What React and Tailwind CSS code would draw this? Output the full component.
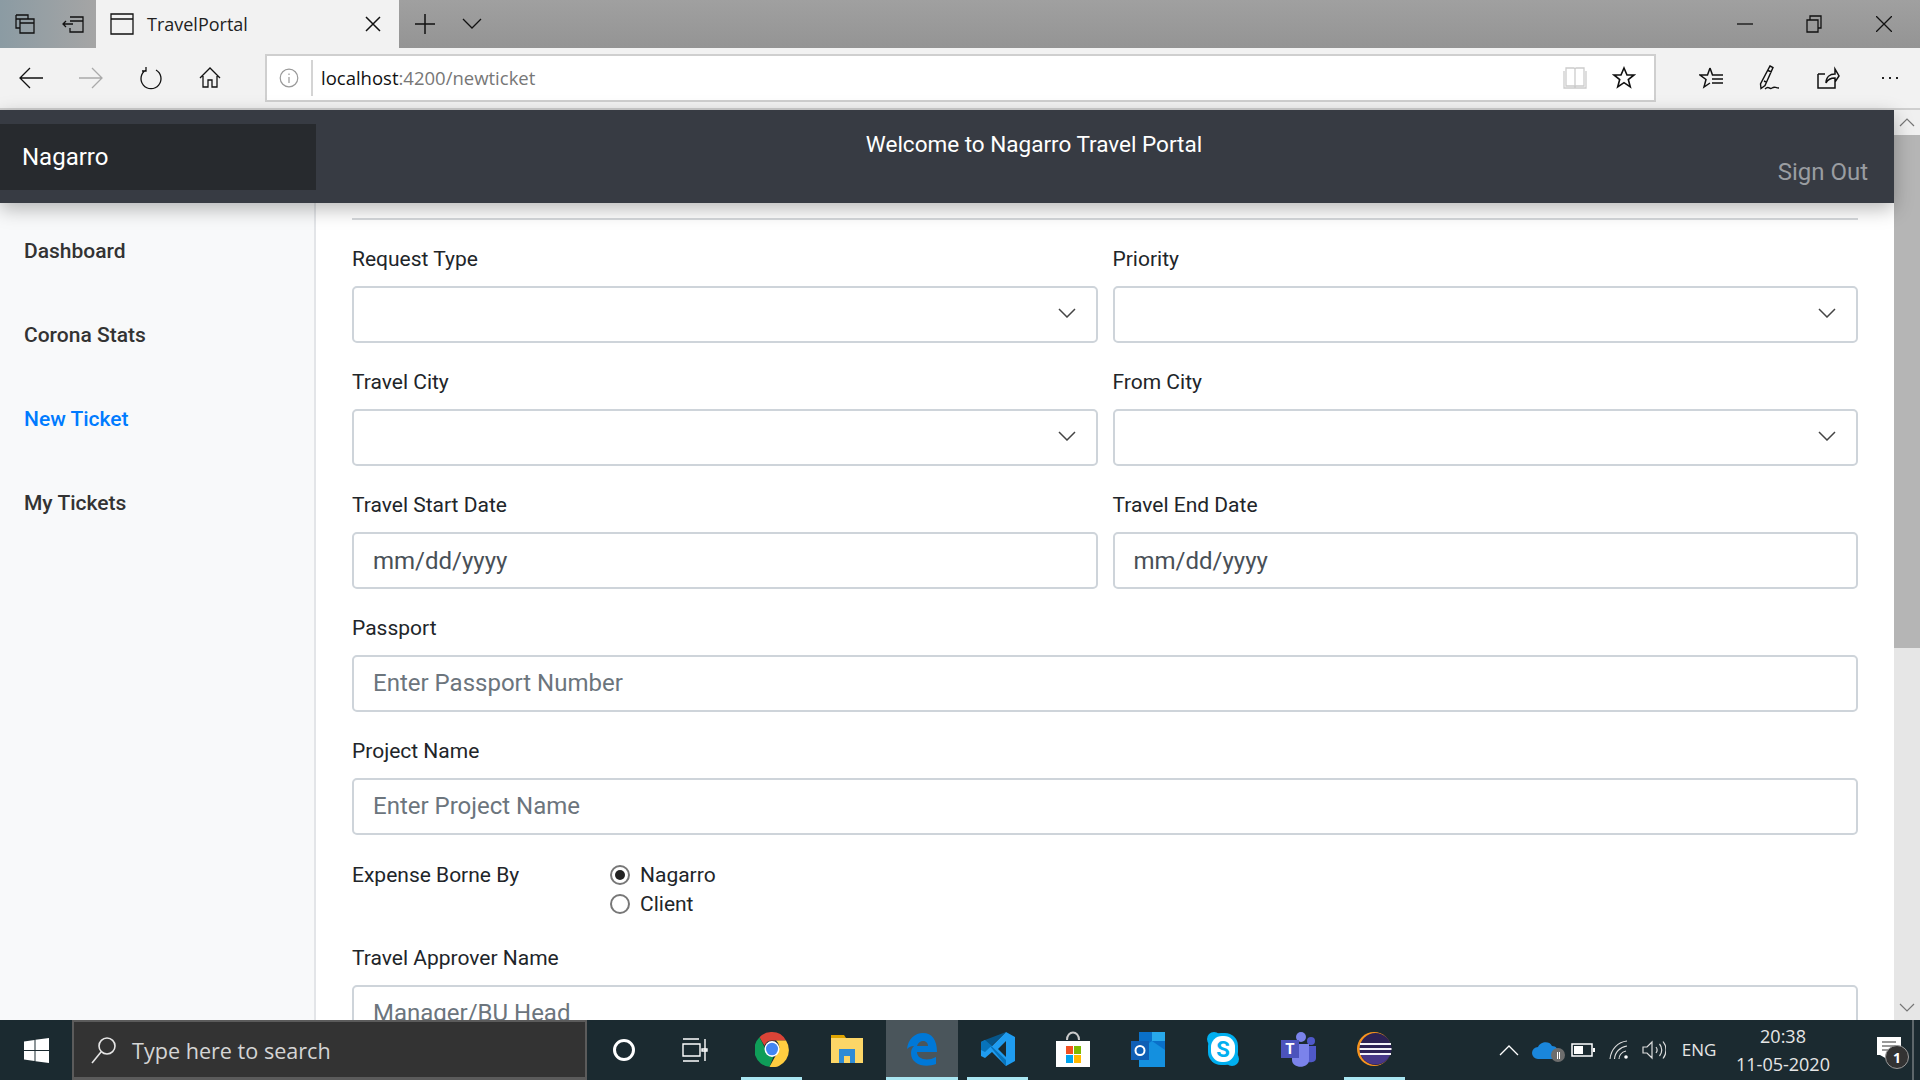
const sans = "font-['Roboto',sans-serif]";

const Ico = ({ w = 24, h = 24, children, className = "" }) => (
  <svg width={w} height={h} viewBox={`0 0 ${w} ${h}`} fill="none" stroke="currentColor" strokeWidth="1.3" className={`shrink-0 ${className}`}>
    {children}
  </svg>
);

const Chevron = () => (
  <svg width="18" height="10" viewBox="0 0 18 10" fill="none" stroke="#444" strokeWidth="1.5">
    <path d="M1 1l8 8 8-8" />
  </svg>
);

function SelectField({ label }) {
  return (
    <div>
      <label className="block h-[30px] mb-[12px] text-[21px] leading-[30px] text-[#212529]">{label}</label>
      <div className="relative">
        <select className="block w-full h-[57px] appearance-none bg-white border-2 border-[#ced4da] rounded-[5px]" />
        <span className="absolute right-[22px] top-[22px] flex pointer-events-none"><Chevron /></span>
      </div>
    </div>
  );
}

function TextField({ label, placeholder, value }) {
  return (
    <div>
      <label className="block h-[30px] mb-[12px] text-[21px] leading-[30px] text-[#212529]">{label}</label>
      <input
        readOnly
        value={value || ""}
        placeholder={placeholder}
        className={`block w-full h-[57px] px-[19px] text-[24px] text-[#495057] placeholder:text-[#6c757d] bg-white border-2 border-[#ced4da] rounded-[5px] outline-none ${value ? "" : "pb-[2px]"}`}
      />
    </div>
  );
}

function TabStrip() {
  return (
    <div className="flex h-[48px] shrink-0 items-center bg-gradient-to-b from-[#a0a0a0] to-[#949494] text-[#111]">
      <div className="flex h-full w-[96px] items-center bg-gradient-to-r from-[#8b9ba3] to-[#a5a5a5]">
        <div className="w-[49px] flex justify-center">
          <Ico>
            <path d="M3 3h12v4M3 3v13h4M7 7h14v14H7zM7 11h14M3 7h4" />
          </Ico>
        </div>
        <div className="w-[47px] flex justify-center">
          <Ico>
            <path d="M9 5h13v15H9v-4M9 9h13M2 12h10M5 9l-3 3 3 3" />
          </Ico>
        </div>
      </div>
      <div className="flex h-full w-[303px] items-center bg-[#f2f2f2] pl-[14px] pr-[18px] font-['Open_Sans',sans-serif] text-[18px]">
        <Ico w={24} h={24}>
          <path d="M1 2h22v20H1zM1 7h22" />
        </Ico>
        <span className="ml-[13px] flex-1 text-[#222]">TravelPortal</span>
        <Ico w={16} h={16}>
          <path d="M1 1l14 14M15 1L1 15" strokeWidth="1.5" />
        </Ico>
      </div>
      <div className="ml-[6px] w-[40px] flex justify-center">
        <Ico w={22} h={22}>
          <path d="M11 1v20M1 11h20" strokeWidth="1.5" />
        </Ico>
      </div>
      <div className="ml-[7px] w-[40px] flex justify-center">
        <Ico w={20} h={12}>
          <path d="M1 1l9 9 9-9" />
        </Ico>
      </div>
      <div className="ml-auto flex items-center">
        <div className="w-[69px] flex justify-center">
          <Ico w={16} h={4}><path d="M0 2h16" /></Ico>
        </div>
        <div className="w-[69px] flex justify-center">
          <Ico w={16} h={18}><path d="M1 5h11v12H1zM4 5V1h11v12h-3" /></Ico>
        </div>
        <div className="w-[72px] flex justify-center">
          <Ico w={16} h={16}><path d="M0 0l16 16M16 0L0 16" /></Ico>
        </div>
      </div>
    </div>
  );
}

function Toolbar() {
  return (
    <div className="flex h-[62px] shrink-0 items-center bg-[#f2f2f2] border-b-2 border-[#cfcfcf] text-[#111]">
      <div className="flex w-[265px] items-center pl-[7px]">
        <div className="w-[48px] flex justify-center">
          <Ico><path d="M24 12H1M11 2L1 12l10 10" /></Ico>
        </div>
        <div className="ml-[12px] w-[48px] flex justify-center text-[#aaa]">
          <Ico><path d="M0 12h23M13 2l10 10-10 10" /></Ico>
        </div>
        <div className="ml-[12px] w-[48px] flex justify-center">
          <Ico><path d="M7 4a10 10 0 1 0 10 0M7 1v4H3" /></Ico>
        </div>
        <div className="ml-[11px] w-[48px] flex justify-center">
          <Ico><path d="M2 12L12 2l10 10M5 10v11h5v-7h4v7h5V10" /></Ico>
        </div>
      </div>
      <div className="flex h-[48px] w-[1391px] shrink-0 items-center bg-white border-2 border-[#cfcfcf]">
        <div className="w-[44px] flex justify-center text-[#999]">
          <svg width="20" height="20" viewBox="0 0 20 20" fill="none" stroke="currentColor" strokeWidth="1.2">
            <circle cx="10" cy="10" r="8.8" />
            <path d="M10 9v6M10 5.500v1.500" />
          </svg>
        </div>
        <div className="h-[36px] w-[2px] bg-[#d4d4d4]" />
        <div className="ml-[8px] flex-1 font-['Open_Sans',sans-serif] text-[18.500px] text-[#111]">
          localhost<span className="text-[#777]">:4200/newticket</span>
        </div>
        <div className="w-[48px] flex justify-center text-[#ccc]">
          <Ico><path d="M3 2h8l1 1 1-1h8v18h-8l-1 1-1-1H3zM12 3v17M1 5v17h22V5" /></Ico>
        </div>
        <div className="w-[50px] flex justify-center mr-[5px]">
          <Ico><path d="M12 2l3 7h7l-5.700 4.500 2 7.500-6.300-4.300L5.700 21l2-7.500L2 9h7z" strokeWidth="1.6" /></Ico>
        </div>
      </div>
      <div className="flex flex-1 items-center pl-[31px]">
        <div className="w-[48px] flex justify-center">
          <Ico><path d="M11 2l2.500 7H24M11 2L8.500 9H1l6 4.500L5 21l6-4M13 13h11M13 17h11" strokeWidth="1.5" /></Ico>
        </div>
        <div className="ml-[11px] w-[48px] flex justify-center">
          <Ico w={26} h={26}><path d="M13 1l3 1.500-8 18-4 3-.5-4.500zM11 5.500l3.500 1.500M7 16l3 1.500M8 24c4-4 4 1 7-1s3 0 7 0" strokeWidth="1.4" /></Ico>
        </div>
        <div className="ml-[10px] w-[48px] flex justify-center">
          <Ico><path d="M2 8v14h17v-6M2 8h7M10 17c0-6 4-9 9-9V3l4 7-4 6v-4c-4 0-7 1-9 5z" strokeWidth="1.5" /></Ico>
        </div>
        <div className="ml-[14px] w-[48px] flex justify-center gap-[5px]">
          <span className="h-[2px] w-[2px] bg-[#222]" />
          <span className="h-[2px] w-[2px] bg-[#222]" />
          <span className="h-[2px] w-[2px] bg-[#222]" />
        </div>
      </div>
    </div>
  );
}

function AppHeader() {
  return (
    <header className={`relative z-10 flex h-[93px] shrink-0 bg-[#373b43] shadow-[0_6px_18px_rgba(0,0,0,0.28)] ${sans}`}>
      <div className="mt-[14px] flex h-[66px] w-[316px] shrink-0 items-center bg-[#272a2e] pl-[22px] text-[24px] text-white">
        Nagarro
      </div>
      <div className="relative flex-1">
        <div className="mt-[19px] pr-[142px] text-center text-[22.500px] leading-[30px] text-white">
          Welcome to Nagarro Travel Portal
        </div>
        <a className="absolute right-[26px] top-[44px] text-[24px] leading-[36px] text-[#9a9da1]">Sign Out</a>
      </div>
    </header>
  );
}

function Sidebar() {
  const links = ["Dashboard", "Corona Stats", "New Ticket", "My Tickets"];
  return (
    <nav className="w-[316px] shrink-0 bg-[#f8f9fa] border-r-2 border-[#e3e5e8] pt-[33px] pl-[24px]">
      {links.map((l) => (
        <div key={l} className={`h-[84px] text-[21px] leading-[30px] font-medium ${l === "New Ticket" ? "text-[#007bff]" : "text-[#333]"}`}>
          {l}
        </div>
      ))}
    </nav>
  );
}

function TicketForm() {
  return (
    <main className="flex-1 px-[36px] pt-[15px]">
      <div className="h-[2px] bg-[#d5d8db]" />
      <div className="mt-[24px] grid grid-cols-2 gap-x-[15px] gap-y-[24px]">
        <SelectField label="Request Type" />
        <SelectField label="Priority" />
        <SelectField label="Travel City" />
        <SelectField label="From City" />
        <TextField label="Travel Start Date" value="mm/dd/yyyy" />
        <TextField label="Travel End Date" value="mm/dd/yyyy" />
        <div className="col-span-2">
          <TextField label="Passport" placeholder="Enter Passport Number" />
        </div>
        <div className="col-span-2">
          <TextField label="Project Name" placeholder="Enter Project Name" />
        </div>
        <div className="col-span-2 flex h-[60px] pt-[1px] text-[21px] leading-[30px] text-[#212529]">
          <div className="w-[258px]">Expense Borne By</div>
          <div>
            <label className="flex h-[29px] items-center gap-[10px]">
              <span className="flex h-[20px] w-[20px] items-center justify-center rounded-full border-2 border-[#777]">
                <span className="h-[10px] w-[10px] rounded-full bg-[#222]" />
              </span>
              Nagarro
            </label>
            <label className="flex h-[29px] items-center gap-[10px]">
              <span className="h-[20px] w-[20px] rounded-full border-2 border-[#777]" />
              Client
            </label>
          </div>
        </div>
        <div className="col-span-2">
          <TextField label="Travel Approver Name" placeholder="Manager/BU Head" />
        </div>
      </div>
    </main>
  );
}

function Scrollbar() {
  return (
    <div className="flex w-[26px] shrink-0 flex-col bg-[#e6e6e6]">
      <div className="flex h-[25px] items-center justify-center bg-[#f0f0f0]">
        <svg width="16" height="9" viewBox="0 0 16 9" fill="none" stroke="#777" strokeWidth="1.2"><path d="M1 8l7-7 7 7" /></svg>
      </div>
      <div className="h-[513px] bg-[#b5b5b5]" />
      <div className="mt-auto flex h-[25px] items-center justify-center">
        <svg width="16" height="9" viewBox="0 0 16 9" fill="none" stroke="#777" strokeWidth="1.2"><path d="M1 1l7 7 7-7" /></svg>
      </div>
    </div>
  );
}

const ChromeIcon = () => (
  <svg width="34" height="36" viewBox="0 0 34 34" preserveAspectRatio="none">
    <path d="M17 1a16 16 0 0 1 14 8H17a8 8 0 0 0-7.500 5L4.500 6A16 16 0 0 1 17 1z" fill="#db4437" />
    <path d="M4.500 6l6 11a7 7 0 0 0 8 7l-4 9.800A16 16 0 0 1 4.500 6z" fill="#0f9d58" />
    <path d="M31 9a16 16 0 0 1-16.500 24.800L22 21a8 8 0 0 0-1-12z" fill="#ffcd40" />
    <circle cx="17" cy="17" r="7.500" fill="#fff" />
    <circle cx="17" cy="17" r="6" fill="#4285f4" />
  </svg>
);

const FolderIcon = () => (
  <svg width="34" height="34" viewBox="0 0 34 34">
    <path d="M1 3h13l2 3H1z" fill="#dfa400" />
    <path d="M1 6h32v25H1z" fill="#fcd667" />
    <path d="M9 31V17h16v14h-5v-7h-6v7z" fill="#2e8bd6" />
    <path d="M14 24h6v7h-6z" fill="#fcd667" />
  </svg>
);

const EdgeIcon = () => (
  <svg width="32" height="34" viewBox="0 0 32 34" fill="none">
    <path d="M1 17C2 7 9 1 17 1c9 0 14 7 14 19H11c0 7 10 10 19 5v7c-11 4-25 1-25-11 0-3 1-5 3-7-3 0-5 1-7 3zm10-3h11c0-6-9-7-11 0z" fill="#0078d7" />
  </svg>
);

const VsIcon = () => (
  <svg width="36" height="36" viewBox="0 0 36 36">
    <path d="M26 1l9 5v24l-9 5-14-14-7 6-4-2V11l4-2 7 6zM26 10l-8 8 8 8z" fill="#1f9cf0" />
    <path d="M26 1L5 21l-4-2V11l4-2 21 20v6l-21-26z" fill="#0065a9" opacity=".75" />
  </svg>
);

const StoreIcon = () => (
  <svg width="36" height="36" viewBox="0 0 36 36">
    <path d="M12 9c0-10 12-10 12 0" fill="none" stroke="#ccc" strokeWidth="2" />
    <path d="M1 10h34v26H1z" fill="#fff" />
    <path d="M11 15h7v8h-7z" fill="#f25022" />
    <path d="M19 15h7v8h-7z" fill="#7fba00" />
    <path d="M11 24h7v8h-7z" fill="#00a4ef" />
    <path d="M19 24h7v8h-7z" fill="#ffb900" />
  </svg>
);

const OutlookIcon = () => (
  <svg width="36" height="36" viewBox="0 0 36 36">
    <path d="M9 1h26v18H9z" fill="#0a70c9" />
    <path d="M22 1h13v9H22z" fill="#28a8ea" />
    <path d="M9 19l13-9 13 9v17H9z" fill="#1490df" />
    <path d="M1 10h18v19H1z" fill="#0f5fb5" />
    <circle cx="10" cy="19.500" r="4.500" fill="none" stroke="#fff" strokeWidth="2" />
  </svg>
);

const SkypeIcon = () => (
  <svg width="34" height="36" viewBox="0 0 34 36">
    <rect x="2" y="2" width="30" height="32" rx="13" fill="#00aff0" />
    <circle cx="8" cy="8" r="7" fill="#00aff0" />
    <circle cx="26" cy="28" r="7" fill="#00aff0" />
    <rect x="5" y="5" width="24" height="26" rx="11" fill="#fff" />
    <text x="17" y="26" textAnchor="middle" fontSize="22" fontWeight="700" fontFamily="Roboto, sans-serif" fill="#00aff0">S</text>
  </svg>
);

const TeamsIcon = () => (
  <svg width="36" height="36" viewBox="0 0 36 36">
    <circle cx="20" cy="6" r="5" fill="#7b83eb" />
    <circle cx="30" cy="10" r="4" fill="#5059c9" />
    <path d="M25 15h10v12c0 4-4 5-10 4z" fill="#5059c9" />
    <path d="M11 13h17v16c0 9-17 9-17 0z" fill="#7b83eb" />
    <path d="M0 9h18v18H0z" fill="#4b53bc" />
    <text x="9" y="23" textAnchor="middle" fontSize="15" fontWeight="700" fontFamily="Roboto, sans-serif" fill="#fff">T</text>
  </svg>
);

const EclipseIcon = () => (
  <svg width="36" height="36" viewBox="0 0 36 36">
    <circle cx="18" cy="18" r="17" fill="#f7941e" />
    <circle cx="19.500" cy="18" r="16" fill="#2c2255" />
    <path d="M5 24h29a16 16 0 0 1-29 0z" fill="#473788" />
    <path d="M4 13h31M3.500 18h32M4 23h31" stroke="#f4f2f8" strokeWidth="2.200" />
  </svg>
);

const taskIcons = [
  { key: "chrome", icon: <ChromeIcon />, on: true },
  { key: "folder", icon: <FolderIcon /> },
  { key: "edge", icon: <EdgeIcon />, on: true, active: true },
  { key: "vscode", icon: <VsIcon />, on: true },
  { key: "store", icon: <StoreIcon /> },
  { key: "outlook", icon: <OutlookIcon /> },
  { key: "skype", icon: <SkypeIcon /> },
  { key: "teams", icon: <TeamsIcon /> },
  { key: "eclipse", icon: <EclipseIcon />, on: true },
];

function Taskbar() {
  return (
    <div className="flex h-[60px] shrink-0 items-center bg-[#1b2a30] text-white font-['Open_Sans',sans-serif]">
      <div className="flex w-[72px] justify-center">
        <svg width="25" height="25" viewBox="0 0 25 25" fill="#fff">
          <path d="M0 3.500l10.500-1.500v10H0zM11.500 1.800L25 0v12H11.500zM0 13h10.500v10L0 21.500zM11.500 13H25v12l-13.500-1.800z" />
        </svg>
      </div>
      <div className="flex h-full w-[515px] items-center border-2 border-b-[3px] border-[#5b5b5b] bg-[#333333] pl-[17px]">
        <svg width="26" height="28" viewBox="0 0 26 28" fill="none" stroke="#e6e6e6" strokeWidth="1.600">
          <circle cx="16" cy="10" r="8" />
          <path d="M10 16L1 27" />
        </svg>
        <span className="ml-[15px] pt-[3px] text-[21.600px] text-[#d5d5d5]">Type here to search</span>
      </div>
      <div className="ml-[19px] flex w-[36px] justify-center">
        <span className="h-[22px] w-[22px] rounded-full border-[3px] border-white" />
      </div>
      <div className="ml-[35px] flex w-[36px] justify-center">
        <svg width="26" height="24" viewBox="0 0 26 24" fill="none" stroke="#fff" strokeWidth="1.400">
          <path d="M1 1h16M1 23h16M1 6h17v12H1zM23 1v22M20 11h5v2h-5z" />
        </svg>
      </div>
      <div className="ml-[21px] flex h-full">
        {taskIcons.map((t) => (
          <div key={t.key} className="flex h-full w-[75.300px] justify-center">
            <div
              className={`flex h-full items-center justify-center border-b-[3px] ${t.active ? "w-[72px] bg-[#4a555b]" : "w-[61px]"} ${t.on ? "border-[#a9e6f2]" : "border-transparent"}`}
            >
              {t.icon}
            </div>
          </div>
        ))}
      </div>
      <div className="ml-auto flex h-full items-center">
        <div className="w-[36px] flex justify-center">
          <svg width="20" height="11" viewBox="0 0 20 11" fill="none" stroke="#fff" strokeWidth="1.300"><path d="M1 10l9-9 9 9" /></svg>
        </div>
        <div className="relative ml-[1px] w-[34px] flex justify-center">
          <svg width="26" height="20" viewBox="0 0 26 20"><path d="M6 19a6 6 0 0 1 0-12c2-5 11-7 14-1 4 0 6 3 6 6s-2 7-6 7z" fill="#1a86db" /></svg>
          <span className="absolute right-[-3px] top-[8px] flex h-[14px] w-[14px] items-center justify-center rounded-full bg-[#6d6d6d] gap-[1px]">
            <i className="h-[7px] w-[1px] bg-white" /><i className="h-[7px] w-[1px] bg-white" />
          </span>
        </div>
        <div className="ml-[2px] w-[38px] flex justify-center">
          <svg width="24" height="14" viewBox="0 0 24 14"><path d="M1 1h20v12H1z" fill="none" stroke="#fff" strokeWidth="1.500" /><path d="M3 3h9v8H3zM22 5h2v4h-2z" fill="#fff" /></svg>
        </div>
        <div className="-ml-[1px] w-[36px] flex justify-center">
          <svg width="20" height="20" viewBox="0 0 20 20" fill="none" stroke="#ddd" strokeWidth="1.100">
            <path d="M1 19C2 9 9 2 18 1M5.500 19C6 12 11 7 18 6M10 19c0-3 2-7 7-8" />
            <circle cx="17" cy="17" r="1.800" fill="#fff" stroke="none" />
          </svg>
        </div>
        <div className="w-[34px] flex justify-center">
          <svg width="24" height="20" viewBox="0 0 24 20" fill="none" stroke="#ddd" strokeWidth="1.200">
            <path d="M1 7h4l5-5v16l-5-5H1zM14 7c1.500 2 1.500 4 0 6M17.500 4c3 3.500 3 8.500 0 12M21 1.500c4 5 4 12 0 17" />
          </svg>
        </div>
        <div className="ml-[2px] w-[52px] text-center text-[17px] text-[#e6e6e6]">ENG</div>
        <div className="ml-[3px] w-[110px] text-center text-[18px] leading-[28px] text-[#e6e6e6]">
          <div>20:38</div>
          <div>11-05-2020</div>
        </div>
        <div className="relative ml-[29px] w-[44px] flex justify-center">
          <svg width="26" height="28" viewBox="0 0 26 28"><path d="M1 1h24v18H10l8 8-14-8H1z" fill="#fff" /><path d="M6 6h14M6 10h14M6 14h10" stroke="#333" strokeWidth="1" /></svg>
          <span className="absolute left-[18px] top-[9px] flex h-[24px] w-[24px] items-center justify-center rounded-full bg-[#333] border border-[#999] text-[14px] font-bold">1</span>
        </div>
        <div className="ml-[1px] h-full w-[2px] bg-[#5d666a]" />
        <div className="w-[6px]" />
      </div>
    </div>
  );
}

export default function App() {
  return (
    <div className="flex h-screen flex-col overflow-hidden bg-white">
      <TabStrip />
      <Toolbar />
      <div className="flex min-h-0 flex-1">
        <div className={`flex min-w-0 flex-1 flex-col ${sans}`}>
          <AppHeader />
          <div className="flex min-h-0 flex-1 overflow-hidden">
            <Sidebar />
            <TicketForm />
          </div>
        </div>
        <Scrollbar />
      </div>
      <Taskbar />
    </div>
  );
}
